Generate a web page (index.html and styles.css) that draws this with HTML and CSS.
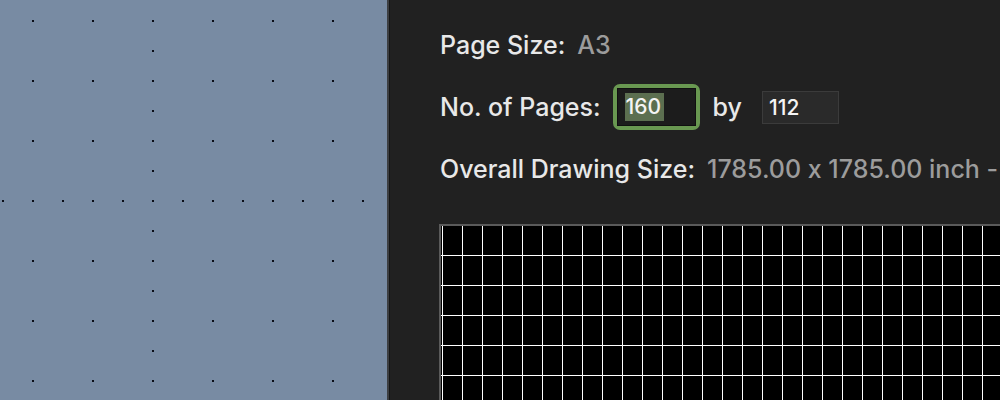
FILE: index.html
```html
<!DOCTYPE html>
<html>
<head>
<meta charset="utf-8">
<link rel="stylesheet" href="styles.css">
</head>
<body>
<div class="app">
  <div class="canvas">
    <svg class="dots" width="387" height="400" xmlns="http://www.w3.org/2000/svg">
      <defs>
        <pattern id="big" width="60" height="60" patternUnits="userSpaceOnUse">
          <rect x="32" y="20" width="2" height="2" fill="#0b0e18"/>
        </pattern>
        <pattern id="small" width="30" height="30" patternUnits="userSpaceOnUse">
          <rect x="2" y="20" width="2" height="2" fill="#0b0e18"/>
        </pattern>
        <pattern id="col" width="30" height="30" patternUnits="userSpaceOnUse">
          <rect x="2" y="20" width="2" height="2" fill="#0b0e18"/>
        </pattern>
      </defs>
      <rect x="0" y="0" width="387" height="400" fill="url(#big)"/>
      <rect x="0" y="180" width="387" height="30" fill="url(#small)"/>
      <rect x="150" y="0" width="30" height="400" fill="url(#col)"/>
    </svg>
  </div>
  <div class="divider"></div>
  <div class="panel">
    <div class="row">
      <span class="label">Page Size:</span>
      <span class="value">A3</span>
    </div>
    <div class="row">
      <span class="label">No. of Pages:</span>
      <span class="ring"><span class="field focused"><span class="sel">160</span></span></span>
      <span class="label by">by</span>
      <span class="field plain">112</span>
    </div>
    <div class="row">
      <span class="label">Overall Drawing Size:</span>
      <span class="value">1785.00 x 1785.00 inch -</span>
    </div>
    <div class="grid"></div>
  </div>
</div>
</body>
</html>
```

FILE: styles.css
```css
html, body {
  margin: 0;
  padding: 0;
  width: 1000px;
  height: 400px;
  overflow: hidden;
  background: #212121;
}

.app {
  display: flex;
  width: 1000px;
  height: 400px;
  font-family: Inter, "Liberation Sans", sans-serif;
  font-feature-settings: "calt" 0;
}

.canvas {
  width: 387px;
  height: 400px;
  flex: none;
  background: #788ba3;
}

.dots {
  display: block;
}

.divider {
  width: 2px;
  flex: none;
  background: #3d3f42;
  border-right: 1px solid #161616;
}

.panel {
  flex: 1;
  min-width: 0;
  padding: 14px 0 0 50px;
  display: flex;
  flex-direction: column;
  overflow: hidden;
  background: #212121;
}

.row {
  flex: none;
  height: 62px;
  display: flex;
  align-items: center;
  white-space: nowrap;
}

.label {
  color: #e8e8e8;
  font-size: 25px;
  font-weight: 450;
}

.value {
  color: #9c9c9c;
  font-size: 25px;
  font-weight: 450;
  margin-left: 12px;
}

.ring {
  margin-left: 12px;
  border: 4px solid #699851;
  border-radius: 7px;
  display: flex;
}

.field {
  display: flex;
  align-items: center;
  box-sizing: border-box;
  font-size: 21px;
  font-weight: 450;
  color: #f4f4f4;
}

.field.focused {
  width: 79px;
  height: 38px;
  background: #1c1c1c;
  border: 1px solid #101010;
  padding-left: 7px;
}

.sel {
  background: #5c6f50;
  height: 28px;
  line-height: 28px;
  padding: 0 3px 0 1px;
}

.by {
  margin-left: 13px;
}

.field.plain {
  margin-left: 20px;
  width: 77px;
  height: 33px;
  background: #2a2a2a;
  border: 1px solid #3b3b3b;
  padding-left: 6px;
}

.grid {
  margin-top: 24px;
  flex: none;
  width: 700px;
  height: 200px;
  border-top: 2px solid #5a5a5a;
  border-left: 2px solid #5a5a5a;
  margin-left: -1px;
  background-color: #000;
  background-image:
    linear-gradient(to right, #ffffff 1px, transparent 1px),
    linear-gradient(to bottom, #ffffff 1px, transparent 1px);
  background-size: 20px 30px;
  background-position: 1px -1px;
}
```
